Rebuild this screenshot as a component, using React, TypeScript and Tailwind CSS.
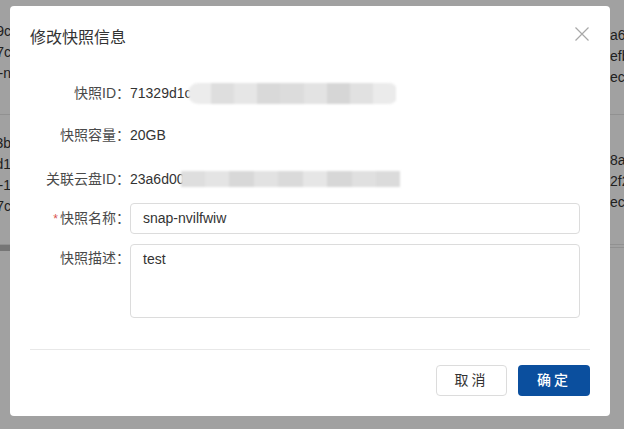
const leftRows = [
  { h: "h-[115px]", pt: "pt-[21px]", lines: ["3fa0e9c", "b1e47c", "snap-n"] },
  { h: "h-[130px]", pt: "pt-[18px]", lines: ["5c2d3b", "a71fd1", "disk-1", "0e417c"] },
];

const rightRows = [
  { h: "h-[115px]", pt: "pt-[25px]", lines: ["a6", "efb", "ec"] },
  { h: "h-[130px]", pt: "pt-[35px]", lines: ["8a", "2f2", "ec"] },
];

// pixelated mask over sensitive ids
const maskA = ["bg-[#ececec]", "bg-[#dedede]", "bg-[#e6e6e6]", "bg-[#d9d9d9]", "bg-[#dcdcdc]", "bg-[#e3e3e3]", "bg-[#d6d6d6]", "bg-[#e1e1e1]", "bg-[#ebebeb]"];
const maskB = ["bg-[#dedede]", "bg-[#e4e4e4]", "bg-[#d8d8d8]", "bg-[#e2e2e2]", "bg-[#dadada]", "bg-[#e6e6e6]", "bg-[#d7d7d7]", "bg-[#e0e0e0]", "bg-[#dbdbdb]"];

function Mask({ cells, className }: { cells: string[]; className: string }) {
  return (
    <div className={`flex overflow-hidden blur-[1px] ${className}`}>
      {cells.map((c, i) => (
        <div key={i} className={`flex-1 ${c}`} />
      ))}
    </div>
  );
}

function Row({ label, children, className = "" }: { label: React.ReactNode; children: React.ReactNode; className?: string }) {
  return (
    <div className={`flex ${className}`}>
      <div className="w-[100px] shrink-0 text-right text-[14px] text-[#4a4a4a] leading-[28px]">{label}</div>
      <div className="flex-1 mr-[10px]">{children}</div>
    </div>
  );
}

export default function App() {
  return (
    <div className="relative w-[624px] h-[429px] overflow-hidden bg-white font-['Liberation_Sans','Noto_Sans_CJK_SC',sans-serif]">
      {/* page underneath */}
      <div className="flex justify-between text-[14px] text-[#333] leading-[21px]">
        <div className="w-[11px] flex flex-col">
          {leftRows.map((r, i) => (
            <div key={i} className={`${r.h} ${r.pt} border-b border-[#e6e6e6] flex flex-col items-end`}>
              {r.lines.map((l) => (
                <div key={l} className="whitespace-nowrap">{l}</div>
              ))}
            </div>
          ))}
          <div className="h-[6px] bg-[#bcbcbc]" />
        </div>
        <div className="w-[14px] flex flex-col">
          {rightRows.map((r, i) => (
            <div key={i} className={`${r.h} ${r.pt} border-b border-[#e6e6e6] flex flex-col`}>
              {r.lines.map((l) => (
                <div key={l} className="whitespace-nowrap">{l}</div>
              ))}
            </div>
          ))}
          <div className="h-[3px] border-b border-[#e6e6e6]" />
        </div>
      </div>
      <div className="absolute inset-0 bg-black/[0.37]" />

      {/* dialog */}
      <div className="absolute left-[10px] top-[6px] w-[600px] h-[410px] bg-white rounded-[4px] px-5 pt-5 flex flex-col">
        <div className="flex items-center justify-between">
          <h2 className="text-[16px] leading-[22px] text-[#333] pt-[1px]">修改快照信息</h2>
          <svg width="14" height="14" viewBox="0 0 14 14" className="mr-[1px] -mt-[7px] text-[#a8a8a8]">
            <path d="M0.5 0.5 L13.5 13.5 M13.5 0.5 L0.5 13.5" stroke="currentColor" strokeWidth="1.2" fill="none" />
          </svg>
        </div>

        <div className="mt-[30px] flex flex-col">
          <Row label="快照ID：">
            <div className="flex items-center h-[28px] text-[14px] text-[#333]">
              <span>71329d1c</span>
              <Mask cells={maskA} className="-ml-[4px] w-[209px] h-[21px] rounded-l-[10px] rounded-r-[8px]" />
            </div>
          </Row>
          <Row label="快照容量：" className="mt-[14px]">
            <div className="h-[28px] leading-[28px] text-[14px] text-[#333]">20GB</div>
          </Row>
          <Row label="关联云盘ID：" className="mt-[16px]">
            <div className="flex items-center h-[28px] text-[14px] text-[#333]">
              <span>23a6d00</span>
              <Mask cells={maskB} className="-ml-[4px] w-[220px] h-[16px]" />
            </div>
          </Row>
          <Row
            label={
              <span>
                <span className="text-[#d9534f] mr-[2px] text-[12px]">*</span>快照名称：
              </span>
            }
            className="mt-[10px] items-center"
          >
            <div className="h-[31px] border border-[#dcdcdc] rounded-[4px] px-3 text-[14px] leading-[29px] text-[#333]">snap-nvilfwiw</div>
          </Row>
          <Row label="快照描述：" className="mt-[10px]">
            <div className="h-[74px] border border-[#dcdcdc] rounded-[4px] px-3 pt-[2px] text-[14px] leading-[24px] text-[#333]">test</div>
          </Row>
        </div>

        <div className="mt-[31px] border-t border-[#e8e8e8]" />

        <div className="mt-[15px] flex justify-end gap-[11px]">
          <button className="w-[71px] h-[31px] border border-[#dcdcdc] rounded-[4px] bg-white text-[14px] text-[#333] tracking-[3px]">取消</button>
          <button className="w-[72px] h-[31px] rounded-[4px] bg-[#0b4f9e] text-[14px] text-white font-medium tracking-[3px]">确定</button>
        </div>
      </div>
    </div>
  );
}
